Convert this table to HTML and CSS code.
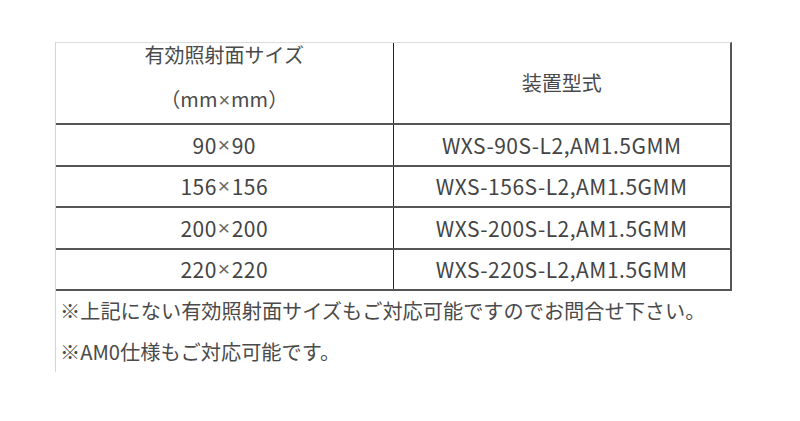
FILE: index.html
```html
<!DOCTYPE html>
<html lang="ja">
<head>
<meta charset="utf-8">
<title>装置型式</title>
<link rel="stylesheet" href="styles.css">
</head>
<body>
<div class="sheet">
  <div class="grid">
    <div class="row head">
      <div class="cell"><div class="lines"><div>有効照射面サイズ</div><div>（mm<span class="x">×</span>mm）</div></div></div>
      <div class="cell">装置型式</div>
    </div>
    <div class="row">
      <div class="cell data">90<span class="x">×</span>90</div>
      <div class="cell data">WXS-90S-L2,AM1.5GMM</div>
    </div>
    <div class="row">
      <div class="cell data">156<span class="x">×</span>156</div>
      <div class="cell data">WXS-156S-L2,AM1.5GMM</div>
    </div>
    <div class="row">
      <div class="cell data">200<span class="x">×</span>200</div>
      <div class="cell data">WXS-200S-L2,AM1.5GMM</div>
    </div>
    <div class="row">
      <div class="cell data">220<span class="x">×</span>220</div>
      <div class="cell data">WXS-220S-L2,AM1.5GMM</div>
    </div>
  </div>
  <div class="note">※上記にない有効照射面サイズもご対応可能ですのでお問合せ下さい。</div>
  <div class="note">※AM0仕様もご対応可能です。</div>
</div>
</body>
</html>
```

FILE: styles.css
```css
html, body {
  margin: 0;
  padding: 0;
  background: #ffffff;
}

body {
  font-family: "Noto Sans CJK JP", "Noto Sans", sans-serif;
  font-size: 20px;
  color: #4a4a4a;
}

.sheet {
  margin: 42px 0 0 55px;
  width: 676px;
  border-left: 1px solid #d4d4d4;
}

.grid {
  border-top: 1px solid #dcdcdc;
  border-right: 2px solid #555555;
}

.row {
  display: flex;
  height: 39.5px;
  border-bottom: 2px solid #555555;
}

.row.head {
  height: 80px;
}

.cell {
  flex: 1 1 0;
  display: flex;
  align-items: center;
  justify-content: center;
  line-height: 24px;
  white-space: nowrap;
}

.cell + .cell {
  border-left: 1.5px solid #222222;
}

.cell.data {
  font-size: 21px;
  letter-spacing: 0.5px;
  color: #444444;
}

.x {
  font-family: "Liberation Sans", sans-serif;
  font-weight: 300;
  color: #666666;
  padding: 0 1px;
}

.head .cell:first-child {
  padding-bottom: 12px;
}

.lines {
  text-align: center;
  line-height: 44px;
}

.note {
  height: 40.5px;
  line-height: 40.5px;
  padding-left: 4px;
  font-size: 20.2px;
  white-space: nowrap;
}
```
